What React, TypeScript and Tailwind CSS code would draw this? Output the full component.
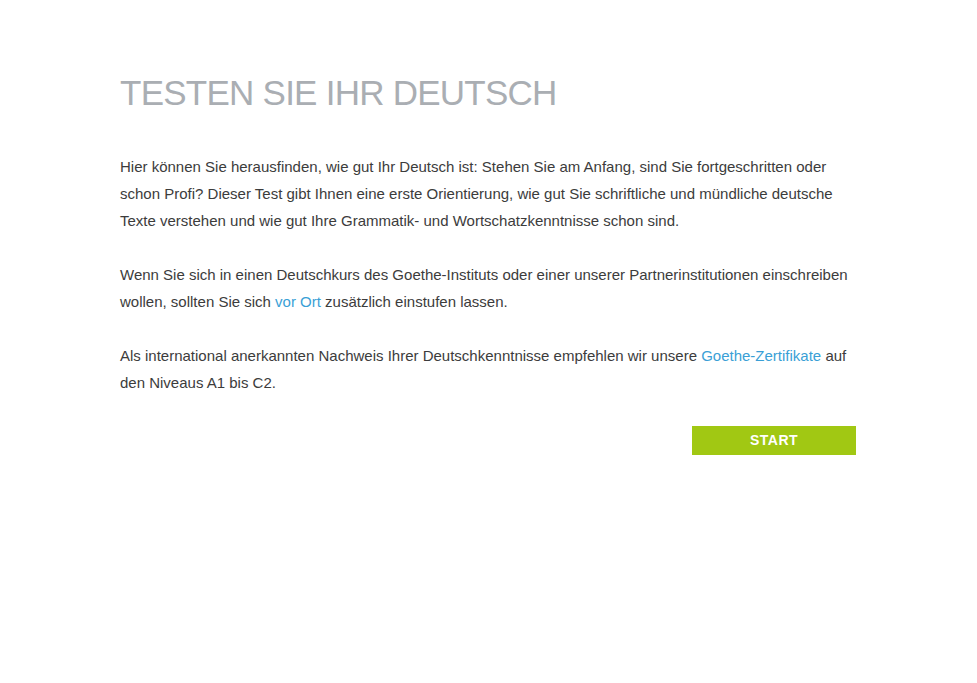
export default function App() {
  return (
    <div className="min-h-[683px] bg-white" style={{ fontFamily: '"Liberation Sans", Arial, sans-serif' }}>
      <div className="ml-[120px] w-[736px] pt-[71px]">
        <h1 className="text-[35px] leading-[44px] tracking-[-0.75px] text-[#aaaeb3] font-normal">TESTEN SIE IHR DEUTSCH</h1>
        <div className="mt-[38px] text-[15px] leading-[27px] text-[#3c3c3c]">
          <p>
            Hier können Sie herausfinden, wie gut Ihr Deutsch ist: Stehen Sie am Anfang, sind Sie fortgeschritten oder schon Profi? Dieser Test gibt Ihnen eine erste Orientierung, wie gut Sie schriftliche und mündliche deutsche Texte verstehen und wie gut Ihre Grammatik- und Wortschatzkenntnisse schon sind.
          </p>
          <p className="mt-[27px]">
            Wenn Sie sich in einen Deutschkurs des Goethe-Instituts oder einer unserer Partnerinstitutionen einschreiben wollen, sollten Sie sich <a className="text-[#3a9fd6]">vor Ort</a> zusätzlich einstufen lassen.
          </p>
          <p className="mt-[27px]">
            Als international anerkannten Nachweis Ihrer Deutschkenntnisse empfehlen wir unsere <a className="text-[#3a9fd6]">Goethe-Zertifikate</a> auf den Niveaus A1 bis C2.
          </p>
        </div>
        <div className="mt-[30px] flex justify-end">
          <button className="w-[164px] h-[29px] bg-[#a1c813] text-white font-bold text-[14px] tracking-[0.5px]">START</button>
        </div>
      </div>
    </div>
  );
}
